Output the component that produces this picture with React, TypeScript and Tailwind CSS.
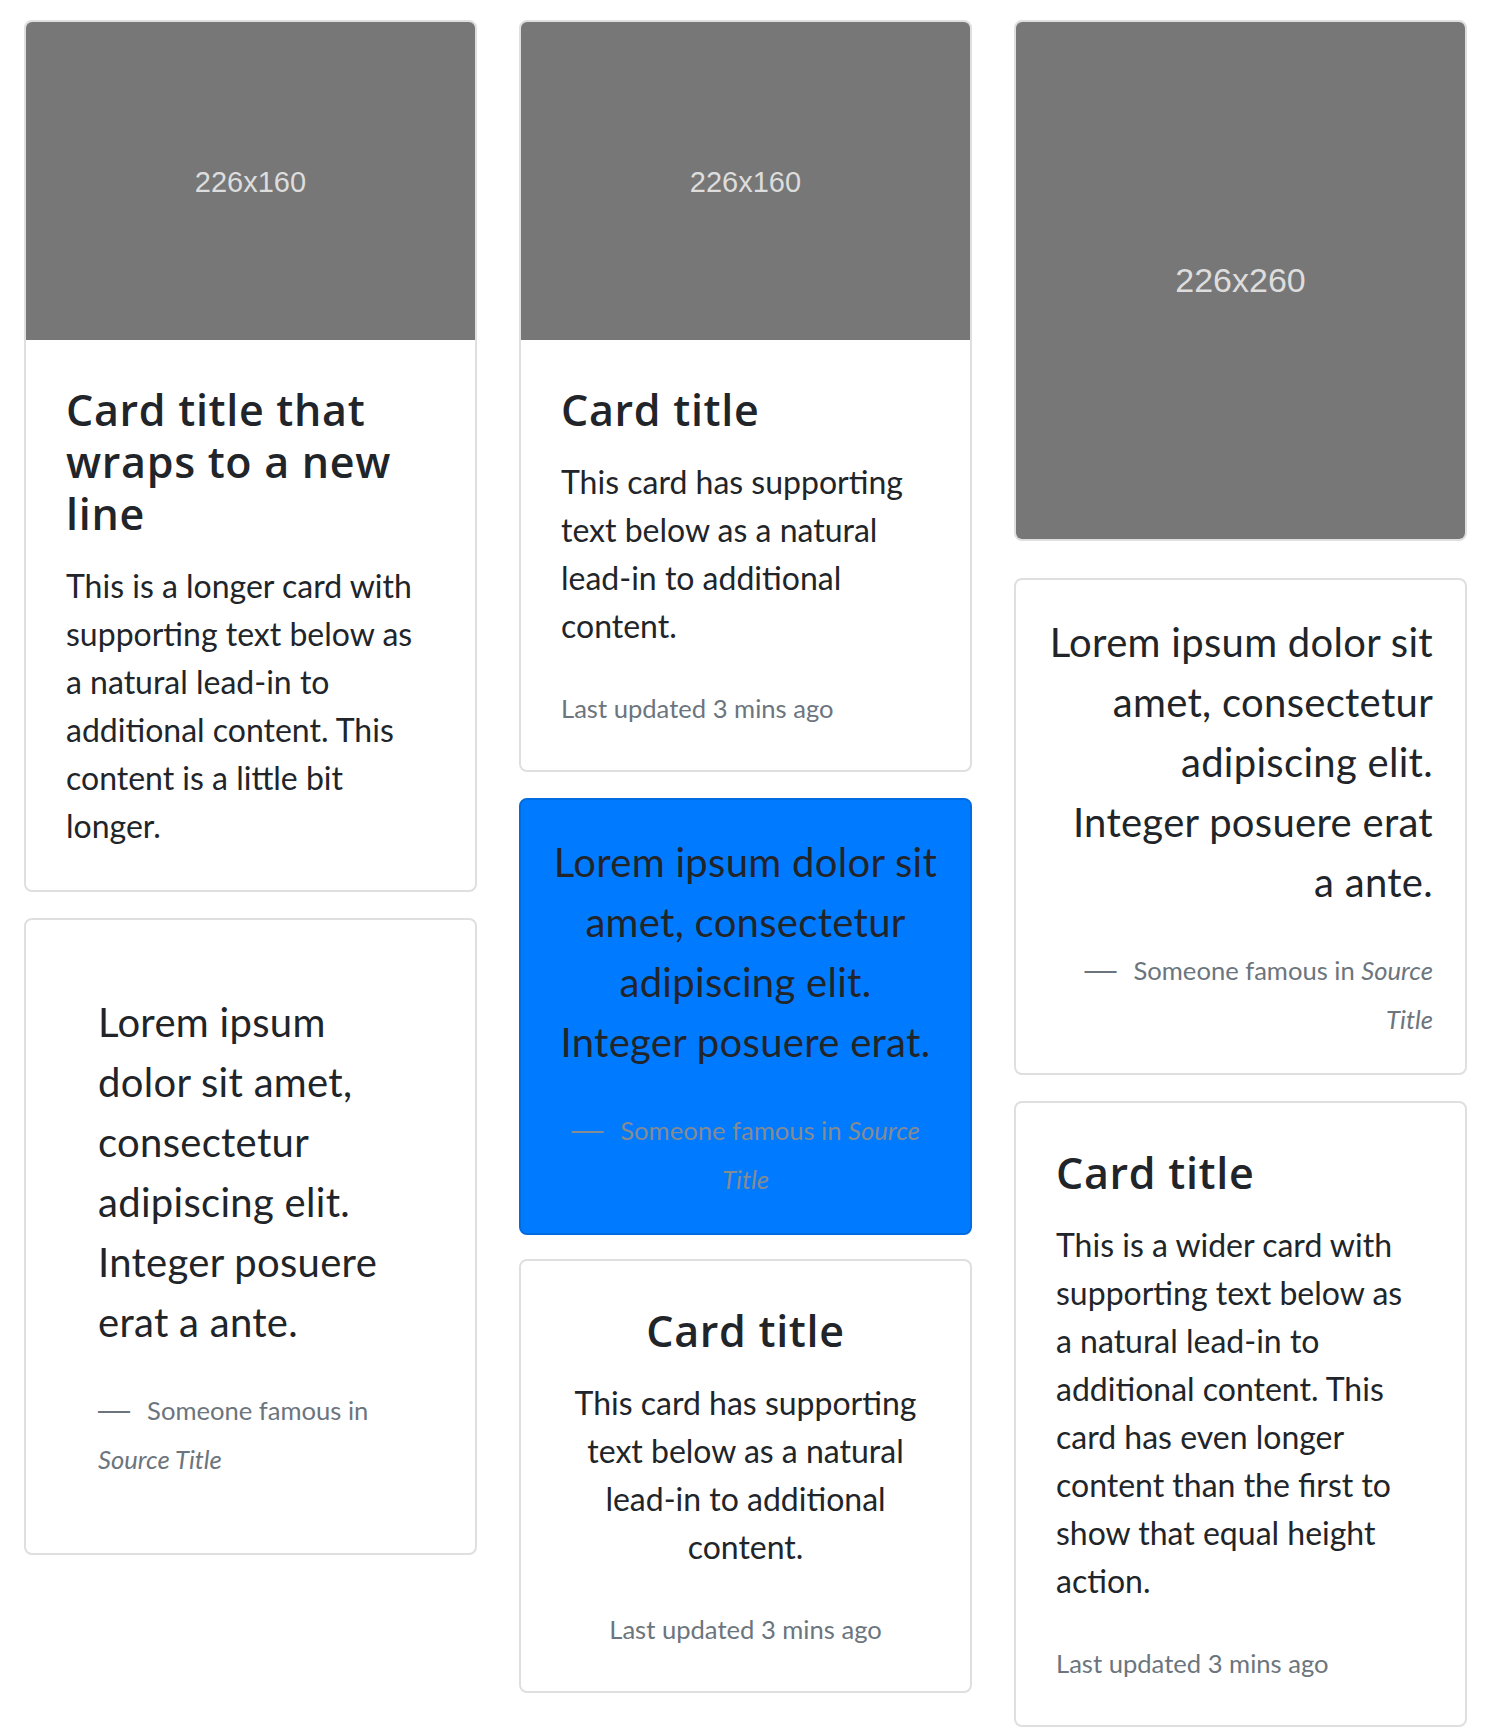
import clsx from "clsx";
import { ReactNode } from "react";

type TCardProps = {
  className?: string;
  primary?: boolean;
  children: ReactNode;
};

const Card = ({ className, primary, children }: TCardProps) => (
  <div
    className={clsx(
      "flex flex-col overflow-hidden rounded-lg border-2 text-[#212529]",
      primary ? "border-[#006cdf] bg-[#007bff]" : "border-[#dfdfdf] bg-white",
      className
    )}
  >
    {children}
  </div>
);

const Placeholder = ({ label, tall }: { label: string; tall?: boolean }) => (
  <div
    className={clsx(
      "flex items-center justify-center bg-[#777777] font-['Liberation_Sans',sans-serif] text-[#dddddd]",
      tall ? "h-[517px] text-[34px]" : "h-[318px] pt-[3px] text-[29px]"
    )}
  >
    {label}
  </div>
);

const Title = ({ children }: { children: ReactNode }) => (
  <h5 className="mb-[22px] pt-[4px] font-['Open_Sans',sans-serif] text-[43px] leading-[52px] font-semibold tracking-[0.7px]">
    {children}
  </h5>
);

const Text = ({ children }: { children: ReactNode }) => (
  <p className="text-[32px] leading-[1.5]">{children}</p>
);

const Updated = () => (
  <p className="mt-[32px] text-[32px] leading-[1.5]">
    <small className="text-[25.6px] text-[#6c757d]">Last updated 3 mins ago</small>
  </p>
);

type TQuoteProps = {
  text: string;
  className?: string;
  footerColor?: string;
};

const Quote = ({ text, className, footerColor }: TQuoteProps) => (
  <blockquote className={className}>
    <p className="mb-[32px] text-[40px] leading-[60px] tracking-[0.3px]">{text}</p>
    <footer className={clsx("text-[32px] leading-[1.5]", footerColor ?? "text-[#6c757d]")}>
      <span className="font-['Liberation_Sans',sans-serif]">{"\u2014\u00a0"}</span>{" "}
      <small className="text-[25.6px]">
        Someone famous in <cite className="italic">Source Title</cite>
      </small>
    </footer>
  </blockquote>
);

export default function App() {
  return (
    <div className="min-h-screen bg-white pt-[20px] pr-[20px] pb-[10px] pl-[24px] font-['Lato',sans-serif]">
      <div className="grid grid-cols-3 items-start gap-x-[42px]">
        <div className="flex flex-col">
          <Card className="mb-[26px]">
            <Placeholder label="226x160" />
            <div className="p-[40px]">
              <Title>Card title that wraps to a new line</Title>
              <Text>
                This is a longer card with supporting text below as a natural lead-in to
                additional content. This content is a little bit longer.
              </Text>
            </div>
          </Card>
          <Card className="mb-[26px] p-[32px]">
            <Quote
              className="p-[40px]"
              text="Lorem ipsum dolor sit amet, consectetur adipiscing elit. Integer posuere erat a ante."
            />
          </Card>
        </div>

        <div className="flex flex-col">
          <Card className="mb-[26px]">
            <Placeholder label="226x160" />
            <div className="p-[40px]">
              <Title>Card title</Title>
              <Text>
                This card has supporting text below as a natural lead-in to additional content.
              </Text>
              <Updated />
            </div>
          </Card>
          <Card primary className="mb-[24px] p-[32px] text-center">
            <Quote
              footerColor="text-[#858b91]"
              text="Lorem ipsum dolor sit amet, consectetur adipiscing elit. Integer posuere erat."
            />
          </Card>
          <Card className="mb-[26px] text-center">
            <div className="p-[40px]">
              <Title>Card title</Title>
              <Text>
                This card has supporting text below as a natural lead-in to additional content.
              </Text>
              <Updated />
            </div>
          </Card>
        </div>

        <div className="flex flex-col">
          <Card className="mb-[37px]">
            <Placeholder label="226x260" tall />
          </Card>
          <Card className="mb-[26px] p-[32px] text-right">
            <Quote text="Lorem ipsum dolor sit amet, consectetur adipiscing elit. Integer posuere erat a ante." />
          </Card>
          <Card className="mb-[26px]">
            <div className="p-[40px]">
              <Title>Card title</Title>
              <Text>
                This is a wider card with supporting text below as a natural lead-in to
                additional content. This card has even longer content than the first to show
                that equal height action.
              </Text>
              <Updated />
            </div>
          </Card>
        </div>
      </div>
    </div>
  );
}
